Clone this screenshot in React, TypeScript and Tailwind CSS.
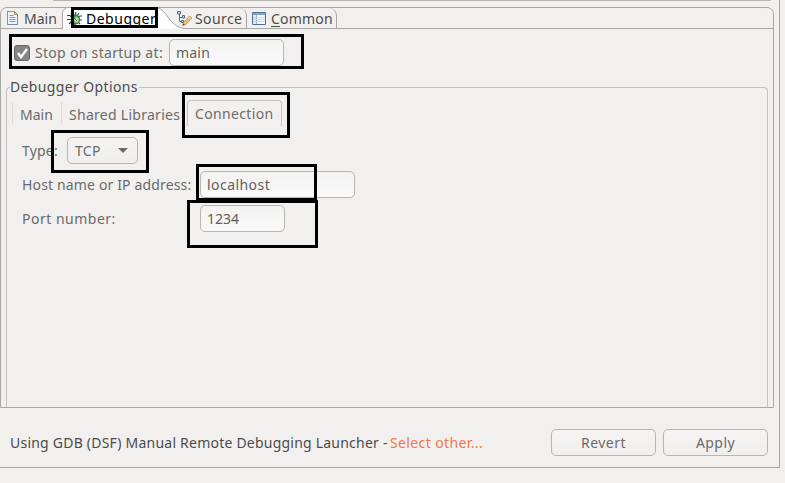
import type { ReactNode } from "react";

function PageIcon() {
  return (
    <svg width="12" height="14" viewBox="0 0 12 14" className="block shrink-0">
      <path d="M.5.5h7l3 3v10H.5z" fill="#eef4fb" stroke="#7686a5" />
      <path d="M.5 13.500V.5h7l3 3" fill="none" stroke="#a9935a" />
      <path d="M7.500.5v3h3z" fill="#e3c988" stroke="#b09455" />
      <path d="M2.500 4.500h4M2.500 6.500h6M2.500 8.500h6M2.500 10.500h6" stroke="#7e9acb" />
    </svg>
  );
}

function BugIcon() {
  return (
    <svg width="16" height="14" viewBox="0 0 16 14" className="block shrink-0">
      <path
        d="M4 1l2 3M9 0l-1 3M12 1l-2 3M0 3.500h3l2 2M0 7.500h5M2 12l3-3M15 4h-2l-2 1M15 8h-4M13 12l-2-2M8 11v3"
        stroke="#174e50"
        strokeWidth="1.2"
        fill="none"
      />
      <ellipse cx="8.500" cy="7.500" rx="4" ry="4.500" fill="#5c9e55" stroke="#1e6252" />
      <ellipse cx="9.500" cy="8" rx="2.300" ry="2.700" fill="#b9d98d" />
      <path d="M5 4l5 5" stroke="#2b7256" strokeWidth=".8" />
    </svg>
  );
}

function SourceIcon() {
  return (
    <svg width="16" height="15" viewBox="0 0 16 15" className="block shrink-0">
      <path d="M2.500 3v7.500h2M2.500 6.500h3" fill="none" stroke="#4d6a9f" />
      <path d="M.5.5h3v2.500h-3zM5.500 4.500h2v2.500h-2zM4.500 9.500h2v2h-2z" fill="#c9d9f1" stroke="#4d6a9f" />
      <path d="M6.500 11.500l6-6.500 2.300 2-6 6.500-3 .8z" fill="#f5bd74" stroke="#bd8344" strokeWidth=".8" />
      <path d="M5.500 14.500l.7-2 1.400 1.300z" fill="#4a4037" />
      <path d="M11.800 6.200l2 2" stroke="#f9e5c8" />
    </svg>
  );
}

function TableIcon() {
  return (
    <svg width="14" height="13" viewBox="0 0 14 13" className="block shrink-0">
      <path d="M.5.5h13v12H.5z" fill="#f5f9fd" stroke="#52709c" />
      <path d="M1 1h12v2H1z" fill="#8ba4ca" />
      <path d="M1 3h3v9H1z" fill="#dfe9f6" />
      <path d="M4.500 3v9" stroke="#9db3d2" />
      <path d="M1 5.500h12M1 7.500h12M1 9.500h12" stroke="#c4d2e4" strokeWidth=".8" />
    </svg>
  );
}

function Mark({ className }: { className: string }) {
  return <div className={`pointer-events-none absolute border-[3px] border-black ${className}`} />;
}

function Field({ className, children }: { className: string; children: ReactNode }) {
  return (
    <div
      className={`flex h-[27px] items-center rounded-[5px] border border-[#b8b6b3] bg-linear-to-b from-[#f2f2f1] to-[#fafafa] pl-1.5 text-[#5f5f5f] ${className}`}
    >
      {children}
    </div>
  );
}

function PushButton({ children }: { children: ReactNode }) {
  return (
    <button className="flex h-[27px] w-[105px] items-center justify-center rounded-[5px] border border-[#b8b6b3] bg-linear-to-b from-[#f5f4f3] to-[#f0efed] tracking-[0.45px] text-[#6b6b6b]">
      {children}
    </button>
  );
}

export default function App() {
  return (
    <div className="relative h-[483px] w-[785px] overflow-hidden bg-[#f1f0ee] font-['Noto_Sans',sans-serif] text-[14px] leading-[20px] whitespace-nowrap text-[#6b6b6b]">
      <div className="flex h-[468px] w-[780px] flex-col border-r border-b border-[#a9a7a4]">
        <div className="ml-[53px] h-[7px] w-[718px] shrink-0">
          <div className="h-px rounded-b bg-[#b7b5b2]" />
        </div>
        <div className="flex h-[401px] w-[774px] flex-col rounded-t-[7px] border border-[#a9a7a4]">
          <div className="flex h-[21px] shrink-0 border-b border-[#a9a7a4] text-[#4c4c4c]">
            <div className="flex w-[61px] items-center pl-1.5">
              <PageIcon />
              <span className="mt-0.5 ml-[5px]">Main</span>
            </div>
            <div className="relative flex h-[21px] w-[114px] items-center pl-[5px]">
              <svg width="124" height="22" viewBox="0 0 124 22" className="absolute -top-px left-0">
                <path d="M.5 22V6Q1 .5 7 .5h87C105 1 107 21 123 21.500V22z" fill="#fff" />
                <path d="M.5 22V6Q1 .5 7 .5h87C105 1 107 21 123 21.500" fill="none" stroke="#a9a7a4" />
              </svg>
              <div className="relative flex items-center text-black">
                <BugIcon />
                <span className="ml-[3px] tracking-[0.5px]">Debugger</span>
              </div>
            </div>
            <div className="relative flex w-[71px] items-center rounded-tr-[8px] border-r border-[#a9a7a4] pl-px">
              <SourceIcon />
              <span className="mt-0.5 ml-0.5 tracking-[0.4px]">Source</span>
            </div>
            <div className="flex w-[90px] items-center rounded-tr-[8px] border-r border-[#a9a7a4] pl-[5px]">
              <TableIcon />
              <span className="mt-0.5 ml-[5px] tracking-[0.2px]">
                <span className="underline underline-offset-2">C</span>ommon
              </span>
            </div>
          </div>
          <div className="mt-[10px] flex h-[27px] shrink-0 items-center pl-[13px]">
            <div className="flex size-4 items-center justify-center rounded-[3px] border border-[#666] bg-[#858585]">
              <svg width="13" height="12" viewBox="0 0 13 12">
                <path d="M2 6l3 4 6-8" fill="none" stroke="#fff" strokeWidth="2.300" />
              </svg>
            </div>
            <span className="ml-[5px] w-[134px] tracking-[0.3px]">Stop on startup at:</span>
            <Field className="w-[115px] tracking-[0.2px]">main</Field>
          </div>
          <fieldset className="mt-[11px] ml-[5px] h-[330px] w-[762px] min-w-0 shrink-0 rounded-t-[4px] border border-b-0 border-[#c5c3c0]">
            <legend className="ml-[3px] h-[20px] w-[129px] tracking-[0.37px] text-[#4c4c4c]">Debugger Options</legend>
            <div className="mt-[3px] ml-[5px] flex h-[26px]">
              <div className="my-[2px] flex w-[49px] items-center border-l border-[#dddbd8] pt-[3px] pl-[7px]">
                Main
              </div>
              <div className="my-[2px] flex w-[126px] items-center border-l border-[#dddbd8] pt-[3px] pl-[7px] tracking-[0.28px]">
                Shared Libraries
              </div>
              <div className="flex w-[95px] items-center rounded-t-[4px] border border-b-0 border-[#c5c3c0] pl-[7px] tracking-[0.35px]">
                Connection
              </div>
            </div>
            <div className="mt-[11px] ml-[15px] flex h-[27px] items-center">
              <span className="w-[45px] tracking-[0.2px]">Type:</span>
              <div className="flex h-[27px] w-[71px] items-center justify-between rounded-[5px] border border-[#b8b6b3] bg-linear-to-b from-[#f5f4f3] to-[#f0efed] pr-[9px] pl-[7px] tracking-[0.3px]">
                TCP
                <svg width="10" height="5" viewBox="0 0 10 5">
                  <path d="M0 0h10L5 5z" fill="#6b6b6b" />
                </svg>
              </div>
            </div>
            <div className="mt-[7px] ml-[15px] flex h-[27px] items-center">
              <span className="w-[178px] tracking-[0.15px]">Host name or IP address:</span>
              <Field className="w-[155px] tracking-[0.45px]">localhost</Field>
            </div>
            <div className="mt-[7px] ml-[15px] flex h-[27px] items-center">
              <span className="w-[178px] tracking-[0.5px]">Port number:</span>
              <Field className="w-[85px]">1234</Field>
            </div>
          </fieldset>
        </div>
        <div className="mt-[21px] flex h-[27px] items-center pl-[10px]">
          <span className="w-[380px] tracking-[0.22px] text-[#4c4c4c]">
            Using GDB (DSF) Manual Remote Debugging Launcher -
          </span>
          <a className="w-[161px] tracking-[0.38px] text-[#f07746]">Select other...</a>
          <div className="flex gap-[7px]">
            <PushButton>Revert</PushButton>
            <PushButton>Apply</PushButton>
          </div>
        </div>
      </div>

      <Mark className="top-[7px] left-[71px] h-[21px] w-[87px]" />
      <Mark className="top-[34px] left-[9px] h-[35px] w-[295px]" />
      <Mark className="top-[92px] left-[182px] h-[46px] w-[108px]" />
      <Mark className="top-[130px] left-[51px] h-[43px] w-[98px]" />
      <Mark className="top-[164px] left-[196px] h-[37px] w-[121px]" />
      <Mark className="top-[200px] left-[187px] h-[48px] w-[131px]" />
    </div>
  );
}
